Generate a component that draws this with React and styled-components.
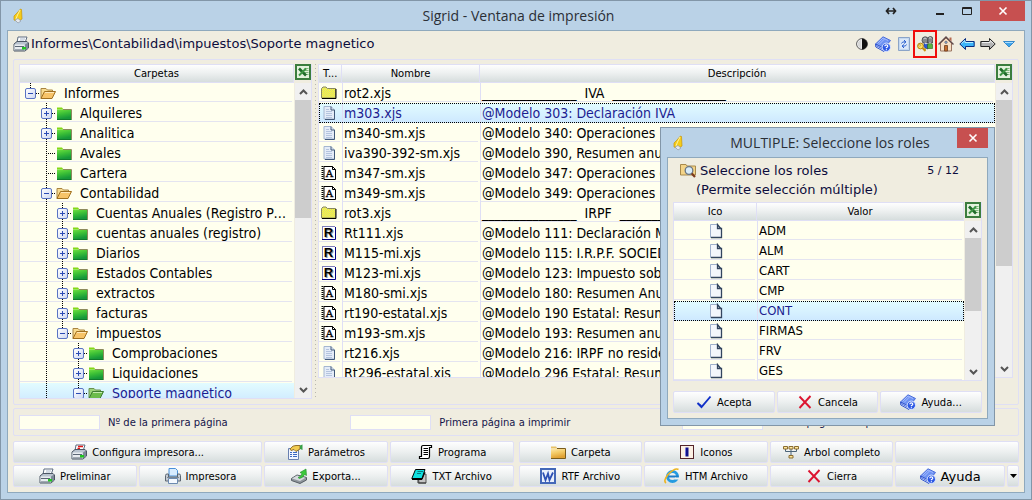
import React from "react";
import styled, { createGlobalStyle, css } from "styled-components";

const Global = createGlobalStyle`
  *, *::before, *::after { box-sizing: border-box; }
  html, body { margin: 0; padding: 0; }
  body { font-family: "DejaVu Sans", Verdana, sans-serif; font-size: 13px; color: #000; }
  button, input { font: inherit; color: inherit; }
`;

const LINE = "#dfdff5";
const FACE = "#f0ede0";
const PAPER = "#ffffee";
const LIST_FONT = '14px "DejaVu Sans Condensed", Tahoma, sans-serif';
const dotsDown = "repeating-linear-gradient(to bottom, #000 0 1px, transparent 1px 2px)";
const dotsRight = "repeating-linear-gradient(to right, #000 0 1px, transparent 1px 2px)";
const metal = "linear-gradient(#fefefe, #eef1f1 45%, #d6dddd)";
const glow = "linear-gradient(#e2fcff, #cde8ff)";

const frame = css`
  display: flex;
  flex-direction: column;
  background: #bad2e7;
  border: 1px solid #8296a8;
`;

const Window = styled.main`
  ${frame}
  position: relative;
  height: 100vh;
  min-height: 420px;
  overflow: hidden;
`;

const TitleBar = styled.header`
  display: grid;
  grid-template-columns: 1fr auto 1fr;
  align-items: center;
  height: 29px;
  flex: none;
  padding: 0 6px 0 11px;
`;

const Title = styled.h1`
  margin: 0;
  font: 400 14px "Open Sans", "Segoe UI", sans-serif;
  color: #2b2f36;
  white-space: nowrap;
`;

const WindowButtons = styled.div`
  display: flex;
  align-self: start;
  justify-self: end;
`;

const WindowButton = styled.button`
  width: ${(p) => p.$w || 27}px;
  height: 20px;
  padding: 0;
  border: 0;
  display: grid;
  place-items: center;
  background: ${(p) => (p.$close ? "#c75050" : "transparent")};
  margin-right: ${(p) => p.$after || 0}px;
`;

const Client = styled.div`
  flex: 1;
  min-height: 0;
  display: flex;
  flex-direction: column;
  margin: 0 6px 6px;
  border: 1px solid #8fa9bd;
  background: ${FACE};
  padding: 0 5px 5px;
`;

const PathBar = styled.div`
  display: flex;
  align-items: center;
  height: 28px;
  padding-bottom: 3px;
  flex: none;
`;

const PathText = styled.span`
  flex: 1;
  margin-left: 2px;
  color: #0c0c3c;
  white-space: nowrap;
`;

const Tools = styled.div`
  display: flex;
  align-items: center;
  gap: 5px;
  padding-right: 2px;
`;

const ToolButton = styled.button`
  position: relative;
  width: 16px;
  height: 16px;
  padding: 0;
  border: 0;
  background: none;
  display: grid;
  place-items: center;
  &::after {
    content: "";
    display: ${(p) => (p.$marked ? "block" : "none")};
    position: absolute;
    inset: -6px -4px;
    border: 2px solid #f00c0c;
  }
`;

const Group = styled.section`
  border: 1px solid ${LINE};
  border-radius: 2px;
`;

const Browser = styled(Group)`
  flex: 1;
  min-height: 0;
  display: flex;
  padding: 4px 5px 5px;
  margin-bottom: 3px;
`;

const Pane = styled.div`
  display: flex;
  min-width: 0;
  overflow: hidden;
  border: solid ${LINE};
  border-width: 0 1px 1px;
  background: ${PAPER};
  ${(p) => (p.$w ? `width: ${p.$w}px; flex: none;` : "flex: 1;")}
  margin-bottom: ${(p) => p.$lift || 0}px;
`;

const PaneBody = styled.div`
  flex: 1;
  min-width: 0;
  overflow: hidden;
`;

const Splitter = styled.div`
  width: 6px;
  flex: none;
  background: repeating-linear-gradient(to bottom, #b9b7ae 0 1px, transparent 1px 4px) 3px 0 / 1px 100% no-repeat;
`;

const Side = styled.div`
  width: 17px;
  flex: none;
  display: flex;
  flex-direction: column;
  background: ${FACE};
`;

const ExportButton = styled.button`
  height: 19px;
  padding: 0 0 0 1px;
  border: 0;
  background: none;
  display: flex;
`;

const Scroll = styled.div`
  flex: 1;
  display: flex;
  flex-direction: column;
  align-items: center;
  width: 16px;
  margin-left: 1px;
  background: #f0f0f0;
`;

const Thumb = styled.div`
  width: 100%;
  height: ${(p) => p.$h};
  background: #cdcdcd;
`;

const ScrollEnd = styled.div`
  height: 17px;
  flex: none;
  display: grid;
  place-items: center;
  ${(p) => p.$down && "margin-top: auto;"}
`;

const heading = css`
  height: 19px;
  padding: 0 4px;
  border: 1px solid ${LINE};
  border-left-width: 0;
  background: ${metal};
  font-size: 10px;
  font-weight: 400;
  line-height: 17px;
  text-align: center;
  white-space: nowrap;
`;

const TreeHeading = styled.div`
  ${heading}
`;

const TreeList = styled.ul`
  list-style: none;
  margin: 0;
  padding: 0;
  font: ${LIST_FONT};
`;

const TreeRow = styled.li`
  display: flex;
  align-items: center;
  height: 20px;
  padding-left: 2px;
  background: ${(p) =>
    p.$selected ? glow : "linear-gradient(#e4e4f0, #e4e4f0) 0 18px / calc(100% - 2px) 1px no-repeat"};
  color: ${(p) => (p.$selected ? "#1c1c90" : "#000")};
`;

const Guide = styled.span`
  width: 16px;
  height: 20px;
  flex: none;
  display: grid;
  place-items: center;
  background: ${(p) => (p.$line ? `${dotsDown} 8px 0 / 1px ${p.$half ? "10px" : "100%"} no-repeat` : "none")};
`;

const Expander = styled.button`
  width: 11px;
  height: 11px;
  padding: 0;
  border: 1px solid #5a74c4;
  border-radius: 2px;
  background: linear-gradient(135deg, #fff, #cfd9f2);
  display: grid;
  place-items: center;
`;

const Twig = styled.span`
  width: ${(p) => (p.$long ? 10 : 4)}px;
  margin-left: ${(p) => (p.$long ? -8 : -2)}px;
  height: 1px;
  flex: none;
  background: ${dotsRight};
`;

const TreeLabel = styled.span`
  margin-left: 8px;
  margin-right: 4px;
  flex: 1;
  overflow: hidden;
  text-overflow: ellipsis;
  white-space: nowrap;
`;

const Table = styled.table`
  width: 100%;
  table-layout: fixed;
  border-collapse: separate;
  border-spacing: 0;
`;

const HeadCell = styled.th`
  ${heading}
  overflow: hidden;
`;

const Cell = styled.td`
  height: 20px;
  padding: ${(p) => (p.$center ? "0" : "0 0 0 1px")};
  font: ${LIST_FONT};
  font-size: ${(p) => (p.$small ? 13 : 14)}px;
  line-height: 20px;
  overflow: hidden;
  white-space: pre;
  border-left: ${(p) => (p.$first ? 0 : 1)}px solid ${LINE};
  background: linear-gradient(#e4e4f0, #e4e4f0) 0 18px / calc(100% - 2px) 1px no-repeat;
  svg { display: block; margin: ${(p) => (p.$center ? "0 auto" : "0 1px")}; }
`;

const Row = styled.tr`
  ${(p) =>
    p.$selected &&
    css`
      background: ${glow};
      color: #1c1c90;
      outline: 1px dotted #000;
      outline-offset: -1px;
      ${Cell} { background: none; }
    `}
`;

const Options = styled(Group)`
  display: grid;
  grid-template-columns: repeat(3, 1fr);
  align-items: center;
  height: 28px;
  flex: none;
  padding: 0 5px;
  margin-bottom: 5px;
`;

const Option = styled.label`
  display: flex;
  align-items: center;
  gap: 8px;
  font-size: 10px;
  color: #14144a;
`;

const PageInput = styled.input`
  width: 81px;
  height: 15px;
  padding: 0 2px;
  border: 1px solid ${LINE};
  background: ${PAPER};
`;

const Actions = styled.div`
  display: flex;
  gap: 5px;
  flex: none;
`;

const ActionGrid = styled.div`
  flex: 1;
  display: grid;
  grid-template-columns: repeat(4, 1fr);
  grid-auto-rows: 22px;
  gap: 2px 2px;
`;

const ActionButton = styled.button`
  display: flex;
  align-items: center;
  justify-content: center;
  gap: 5px;
  min-width: 0;
  height: 22px;
  padding: 0;
  border: 1px solid ${LINE};
  border-radius: 2px;
  background: ${metal};
  font-size: ${(p) => (p.$large ? 13 : 10)}px;
  white-space: nowrap;
  ${(p) => p.$span && `grid-column: span ${p.$span};`}
`;

const SplitButton = styled.div`
  display: grid;
  grid-template-columns: 1fr 12px;
  gap: 2px;
`;

const Dialog = styled.section`
  ${frame}
  position: absolute;
  top: 126px;
  right: 36px;
  width: 335px;
`;

const DialogBody = styled(Client)`
  padding: 2px 5px 5px;
`;

const DialogLead = styled.div`
  display: flex;
  align-items: center;
  height: 20px;
  padding-left: 7px;
  gap: 4px;
  color: #0c0c3c;
`;

const DialogHint = styled.p`
  margin: 0;
  padding-left: 23px;
  line-height: 20px;
  height: 22px;
  color: #0c0c3c;
`;

const Counter = styled.span`
  margin-left: auto;
  padding-right: 23px;
  font-size: 11px;
`;

const DialogPane = styled(Pane)`
  height: 179px;
  flex: none;
`;

const DialogButtons = styled.div`
  display: grid;
  grid-template-columns: repeat(3, 1fr);
  gap: 2px;
  margin-top: 10px;
`;

const Svg = ({ w = 16, h = 16, children }) => (
  <svg width={w} height={h} viewBox={`0 0 ${w} ${h}`} aria-hidden="true">
    {children}
  </svg>
);

const Bell = () => (
  <Svg w={12} h={16}>
    <path d="M8.500 1L9.500 1.500L10 11L6 13.500L2 12V8L5 5Z" fill="#f5cc18" stroke="#c99406" strokeWidth=".7" />
    <path d="M8 2L5.500 7L4 11" stroke="#fff3a0" fill="none" />
    <path d="M3 12L6 10.500L9 13L6 15Z" fill="#e5e9ee" stroke="#8f9aa8" strokeWidth=".7" />
  </Svg>
);

const Printer = ({ red }) => (
  <Svg>
    <path d="M5 1H14L12 7H4Z" fill="#fff" stroke="#5c6b80" />
    {red ? (
      <path d="M7 2.500H12M6.500 4.500H9" stroke="#e01818" strokeWidth="1.500" />
    ) : (
      <path d="M7 3H12M6.500 5H11" stroke="#a9b8cc" />
    )}
    <path d="M1 8L4 5.500H14L15.500 7V12L12 15H1Z" fill="#b9c3cf" stroke="#4c5664" />
    <path d="M1.500 8.500H11.500V14.500H1.500Z" fill="#e8ecf0" />
    <path d="M2 10.500H11M2 14H11" stroke="#5b6675" />
    <path d="M12 8.500L15 6.500V12L12 14.500Z" fill="#7e8998" />
    <rect x="9" y="11" width="4" height="2.500" fill="#21c421" />
  </Svg>
);

const BluePrinter = () => (
  <Svg>
    <path d="M4 .5H10.500L12.500 2.500V8H4Z" fill="#d8ecff" stroke="#4a90d8" />
    <path d="M.5 7.500Q.5 6 2 6H3.500V9H12.500V6H14Q15.500 6 15.500 7.500V13H.5Z" fill="#c5ccd4" stroke="#5b6672" />
    <path d="M3.500 10.500H12.500V15.500H3.500Z" fill="#f4f9ff" stroke="#6c8ab0" />
    <path d="M2 9.500H14" stroke="#7b8692" />
  </Svg>
);

const BookHelp = () => (
  <Svg>
    <path d="M.5 8L8 .8L15.500 4.500L9 12.500Z" fill="#6e92f2" stroke="#4a6cd8" />
    <path d="M2.500 7.500L8 2L13 4.500M4 8.500L9.500 3" stroke="#a4bcff" fill="none" />
    <path d="M.5 8L9 12.500V15.500L.8 11Z" fill="#e0e9ff" stroke="#3457cc" />
    <path d="M1 9.500L9 14" stroke="#4c6ee0" />
    <circle cx="11.300" cy="11.300" r="4.200" fill="#2c58e4" stroke="#dfe9ff" />
    <path d="M9.800 10.200Q9.800 8.800 11.300 8.800T12.800 10.200Q12.800 11 11.400 11.600V12.300M11.400 13.200V14.200" stroke="#fff" strokeWidth="1.200" fill="none" />
  </Svg>
);

const Contrast = () => (
  <Svg>
    <circle cx="8" cy="8" r="5.400" fill="#fff" stroke="#555" />
    <path d="M8 2.600A5.400 5.400 0 0 1 8 13.400Z" fill="#111" />
    <path d="M4 6Q5 4 7.500 3.500V12.500Q5 12 4 10Z" fill="#d8d8d8" />
  </Svg>
);

const RefreshDoc = () => (
  <Svg>
    <path d="M2.500 1.500H13.500V14.500H2.500Z" fill="#c4d8f0" stroke="#8ba4c8" />
    <path d="M4 3H12V13H4Z" fill="#dbe8f8" />
    <path d="M5.500 7.500Q6 5.500 9 5.800M8 4L10 6L8 7.500M10.500 8.500Q10 10.500 7 10.200M8 12L6 10L8 8.500" stroke="#2d62d0" fill="none" />
  </Svg>
);

const UsersKey = () => (
  <Svg>
    <path d="M5 4.500Q5 .8 8 .8T11 3Q11 .5 13.500 .5T15.800 3.500L15.500 7H6Z" fill="#85898c" stroke="#3c4044" strokeWidth=".8" />
    <path d="M6.500 2.800Q8 1.200 9.500 2.800M11.800 2.300Q13 1 14.500 2.300" stroke="#d4d6d8" fill="none" />
    <path d="M10.800 3V7" stroke="#3c4044" />
    <path d="M6.500 9Q8 6 11 8.500V13L8 12Z" fill="#2a58d8" stroke="#1a357c" strokeWidth=".6" />
    <path d="M10.500 8.500Q13 6 15.500 8.500V12.500H10.500Z" fill="#58b040" stroke="#2a6018" strokeWidth=".6" />
    <path d="M7.500 6.500L9 8.500L10 7M12 6.500L13 8L14 6.500" fill="#fff" />
    <path d="M4.500 11L8.500 15M7 14.200L8.500 12.500" stroke="#c89010" strokeWidth="1.800" />
    <circle cx="3.500" cy="10" r="2.900" fill="#ffe060" stroke="#a87808" strokeWidth=".9" />
    <circle cx="2.800" cy="9.300" r=".9" fill="#fff" stroke="#8a6000" strokeWidth=".5" />
  </Svg>
);

const House = () => (
  <Svg>
    <path d="M2.500 7L8 2L13.500 7V15H2.500Z" fill="#f6dfc4" stroke="#9a7460" />
    <path d="M.5 8.500L8 1L15.500 8.500" stroke="#5f4a4a" strokeWidth="1.400" fill="none" />
    <path d="M11.500 1.500H13.500V5.500L11.500 3.500Z" fill="#b56a50" />
    <path d="M6.500 9.500H9.500V15H6.500Z" fill="#c46a2a" stroke="#6c3c20" strokeWidth=".8" />
    <circle cx="8" cy="6.300" r="1.200" fill="#7db4e8" stroke="#6c4c40" strokeWidth=".6" />
  </Svg>
);

const Arrow = ({ right }) => (
  <Svg>
    <g transform={right ? "matrix(-1 0 0 1 16 0)" : undefined}>
      <path d="M.8 8L6.500 2.500V5.500H15.200V10.500H6.500V13.500Z" fill={right ? "#b4b4b4" : "#3cb4f8"} stroke={right ? "#222" : "#0a2c80"} />
      <path d="M2.500 7.500L6 4.500V6.500H14" stroke={right ? "#f0f0f0" : "#b8ecff"} fill="none" />
    </g>
  </Svg>
);

const BlueTriangle = () => (
  <Svg>
    <path d="M2.500 5.500H13.500L8 11Z" fill="#3fa4ea" stroke="#1c78c4" strokeWidth=".8" />
    <path d="M4 6.500H12" stroke="#a8dcff" />
  </Svg>
);

const Excel = () => (
  <Svg>
    <rect x="1" y="1" width="14" height="14" fill="#e4f2de" stroke="#3b7d3f" strokeWidth="2" />
    <path d="M9.500 4.500H13.500M10 6.500H13.500M10 8.500H13.500M9.500 10.500H13.500" stroke="#7fb87c" />
    <path d="M4 4.500L11 11.500" stroke="#1f6b2a" strokeWidth="2.600" />
    <path d="M11 4.500L4 11.500" stroke="#3d9444" strokeWidth="2" />
  </Svg>
);

const Folder = ({ tone = "green" }) => {
  const green = tone === "green";
  return (
    <Svg>
      <defs>
        <linearGradient id={`folder-${tone}`} x1="0" y1="0" x2=".3" y2="1">
          <stop offset="0" stopColor={green ? "#72e040" : "#fdeab0"} />
          <stop offset=".5" stopColor={green ? "#3cc036" : "#f4cc68"} />
          <stop offset="1" stopColor={green ? "#16983a" : "#e0a234"} />
        </linearGradient>
      </defs>
      <path d="M1 4.500V2.500H6L7.500 4.500Z" fill={green ? "#86d816" : "#e8c268"} />
      <path d="M1 4.500H15V14H1Z" fill={`url(#folder-${tone})`} />
      <path d="M7 4.500H15.500V14.500" stroke={green ? "#8d8a5c" : "#7a5c1c"} fill="none" />
      <path d="M1 14.500H15.500" stroke={green ? "#0f7a2a" : "#7a5c1c"} />
    </Svg>
  );
};

const OpenFolder = ({ green }) => (
  <Svg>
    <path d="M1 13.500V3.500H6L7.500 5H12.500V7" fill={green ? "#9cd47a" : "#f8dc90"} stroke={green ? "#6a9050" : "#a88440"} />
    <path d="M1 13.500L4.500 6.500H15.500L12 13.500Z" fill={green ? "#6cbc4c" : "#f7c468"} stroke={green ? "#3f7d34" : "#a07020"} />
    <path d="M5 7.500H14" stroke={green ? "#c4ecae" : "#ffe9b8"} />
  </Svg>
);

const HatchFolder = () => (
  <Svg>
    <defs>
      <pattern id="hatch" width="2" height="2" patternUnits="userSpaceOnUse">
        <rect width="2" height="2" fill="#ffff30" />
        <rect width="1" height="1" fill="#d4d480" />
        <rect x="1" y="1" width="1" height="1" fill="#d4d480" />
      </pattern>
    </defs>
    <path d="M.5 13V3.500L2 2H5L6.500 3.500H14.500V13Z" fill="url(#hatch)" stroke="#8a8a60" />
    <path d="M1 13.500H15V4" fill="none" stroke="#000" />
  </Svg>
);

const LinedPage = () => (
  <Svg>
    <path d="M3 1.500H10L13.500 5V14H3Z" fill="#e4ecf8" stroke="#a4b6d0" />
    <path d="M10 1.500V5H13.500V14.500H4" fill="none" stroke="#405878" />
    <path d="M5 4.500H8M5 6.500H11M5 8.500H11M5 10.500H11M5 12.500H11" stroke="#b4c4de" />
  </Svg>
);

const BlankPage = () => (
  <Svg>
    <path d="M2.500 1.500H9.500L13.500 5.500V14.500H2.500Z" fill="#f4f7fc" stroke="#9fb0cc" />
    <path d="M13 6L9.500 1.500V5.500H13.500V14.500H3" fill="none" stroke="#33455f" strokeWidth="1.300" />
  </Svg>
);

const LetterA = () => (
  <Svg>
    <path d="M3 1.500H11.500L14.500 4.500V14.500H3Z" fill="#fff" stroke="#000" />
    <path d="M11.500 1.500V4.500H14.500" fill="none" stroke="#000" />
    <path d="M1.500 1V15" stroke="#000" strokeWidth="2" strokeDasharray="1 1" />
    <text x="8.500" y="12" fontSize="11" textAnchor="middle" fontFamily="Liberation Serif, serif" stroke="#000" strokeWidth=".3">A</text>
  </Svg>
);

const LetterR = () => (
  <Svg>
    <path d="M1.500 14.500V1.500H14.500" fill="#fff" stroke="#000080" strokeDasharray="1 1" />
    <rect x="2" y="2" width="12" height="12" fill="#fff" />
    <path d="M1 14.500H14.500V2" fill="none" stroke="#000080" />
    <text x="8.500" y="13" fontSize="13" textAnchor="middle" fontFamily="Liberation Sans, sans-serif" fontWeight="700" fill="#999">R</text>
    <text x="7.500" y="12" fontSize="13" textAnchor="middle" fontFamily="Liberation Sans, sans-serif" fontWeight="700">R</text>
  </Svg>
);

const SearchFolder = () => (
  <Svg>
    <path d="M.5 13V2.500H6L7 4H15.500V13Z" fill="#f4d488" stroke="#a88a4c" />
    <circle cx="9" cy="8.500" r="3.800" fill="#d8ecfa" stroke="#6a7684" strokeWidth="1.300" />
    <path d="M11.800 11.500L15 15" stroke="#7c3a1c" strokeWidth="2.200" />
  </Svg>
);

const HandList = () => (
  <Svg>
    <path d="M1.500 4.500H11.500V15.500H1.500Z" fill="#f2f6ff" stroke="#6880b0" />
    <path d="M3 8.500H5M6 8.500H10M3 10.500H5M6 10.500H10M3 12.500H5M6 12.500H10" stroke="#3c68c0" />
    <path d="M3 5Q6 1 9 1.500L13 1.500V5L9 7.500L7 5.500L4 6.500Z" fill="#f2cc50" stroke="#94702c" />
    <path d="M13 1.500L15.500 .5V6L13 5Z" fill="#38a048" />
  </Svg>
);

const ExportIcon = () => (
  <Svg>
    <path d="M.5 10.500L6 7L15.500 9.500V12L9 15.500L.5 12.500Z" fill="#8f969c" stroke="#555c64" />
    <path d="M1 10.500L6 7.500L14.500 9.800L9 13Z" fill="#d5dade" />
    <path d="M7 9.500Q10 9 11 5.500L9 4.500L15 1L15.500 7.500L13.500 6.500Q12 10 8.500 10.500Z" fill="#3cc83c" stroke="#1f8c28" strokeWidth=".6" />
  </Svg>
);

const Scroller = () => (
  <Svg>
    <path d="M4.500 13V3.500Q4.500 1.500 6 1.500H14.500V3.500H12.500V12.500Q12.500 14.500 11 14.500H2.500V12.500H4.500" fill="#fff" stroke="#000" strokeWidth="1.200" />
    <path d="M6.500 4.500H11M6.500 6.500H11M6.500 8.500H11M6.500 10.500H11" stroke="#000" />
  </Svg>
);

const TxtPad = () => (
  <Svg>
    <path d="M7 6H15V15H8Z" fill="#c4c4c4" stroke="#555" />
    <path d="M4.500 1.500H14L11 10.500H.8Z" fill="#10e0e0" stroke="#000" />
    <path d="M6.500 3.500H12M6 5.500H10" stroke="#067a80" />
    <path d="M1 11.500H11L14 4" fill="none" stroke="#000" />
    <path d="M7 12V15H15" fill="none" stroke="#333" />
  </Svg>
);

const WordIcon = () => (
  <Svg>
    <rect x="1" y="1" width="14" height="14" fill="#eaf0fc" stroke="#4468b8" strokeWidth="2" />
    <path d="M3 4.500L5.500 12L8 5.500L9.500 12L13 4.500" fill="none" stroke="#2c50b4" strokeWidth="1.800" />
  </Svg>
);

const BarIcon = () => (
  <Svg>
    <rect x="1.500" y="1.500" width="13" height="13" fill="#fbf0e4" stroke="#54242a" />
    <path d="M8 3.500V12.500" stroke="#101088" strokeWidth="3" />
    <path d="M6.500 4V12" stroke="#7878d8" />
  </Svg>
);

const IeIcon = () => (
  <Svg>
    <circle cx="8.500" cy="8.500" r="5" fill="none" stroke="#259be0" strokeWidth="3" />
    <path d="M4.500 8.500H14.500" stroke="#1d7cc8" strokeWidth="2" />
    <path d="M11 9.500H16V11.500H11Z" fill="#eef0ef" />
    <path d="M2 15Q-1 13 4 6.500Q11 -.5 14.500 1.500" fill="none" stroke="#eeb420" strokeWidth="1.600" />
  </Svg>
);

const TreeIcon = () => (
  <Svg>
    <path d="M2.500 5V7.500H13.500V5M8 5V12" fill="none" stroke="#4c6478" />
    <path d="M.5 2.500H4.500V5H.5ZM6 2.500H10V5H6ZM11.500 2.500H15.500V5H11.500ZM6 11.500H10V14H6Z" fill="#ffe89c" stroke="#8a6c30" />
  </Svg>
);

const RedCross = () => (
  <Svg>
    <path d="M2.500 2.500L13.500 14M13.500 2L2.500 14" stroke="#dc1430" strokeWidth="1.900" fill="none" />
  </Svg>
);

const Check = () => (
  <Svg>
    <path d="M1.500 9L5.500 13L14.500 2.500" stroke="#1030c8" strokeWidth="1.900" fill="none" />
    <path d="M1.500 8.500L5.500 11L5.500 14Z" fill="#1030c8" />
  </Svg>
);

const WinGlyph = ({ kind }) => (
  <Svg w={12} h={12}>
    {kind === "close" && <path d="M2.500 2.500L9.500 9.500M9.500 2.500L2.500 9.500" stroke="#fff" strokeWidth="1.600" />}
    {kind === "max" && <path d="M1.500 2.500H10.500V9.500H1.500ZM1.500 3.500H10.500" fill="none" stroke="#222" />}
    {kind === "min" && <path d="M2 9H10" stroke="#222" strokeWidth="2" />}
    {kind === "wide" && <path d="M1.500 6H10.500M4 3L1.500 6L4 9M8 3L10.500 6L8 9" fill="none" stroke="#222" strokeWidth="1.700" />}
  </Svg>
);

const Chevron = ({ down }) => (
  <Svg w={9} h={6}>
    <path d={down ? "M1 1L4.500 4.500L8 1" : "M1 5L4.500 1.500L8 5"} fill="none" stroke="#555" strokeWidth="2" />
  </Svg>
);

const ScrollBar = ({ thumb }) => (
  <Scroll>
    <ScrollEnd><Chevron /></ScrollEnd>
    <Thumb $h={thumb} />
    <ScrollEnd $down><Chevron down /></ScrollEnd>
  </Scroll>
);

const SideColumn = ({ thumb }) => (
  <Side>
    <ExportButton aria-label="Excel"><Excel /></ExportButton>
    <ScrollBar thumb={thumb} />
  </Side>
);

const tree = [
  { name: "Informes", level: 0, box: "-", open: true, last: true },
  { name: "Alquileres", level: 1, box: "+" },
  { name: "Analitica", level: 1, box: "+" },
  { name: "Avales", level: 1 },
  { name: "Cartera", level: 1 },
  { name: "Contabilidad", level: 1, box: "-", open: true },
  { name: "Cuentas Anuales (Registro Provincial)", level: 2, box: "+" },
  { name: "cuentas anuales (registro)", level: 2, box: "+" },
  { name: "Diarios", level: 2, box: "+" },
  { name: "Estados Contables", level: 2, box: "+" },
  { name: "extractos", level: 2, box: "+" },
  { name: "facturas", level: 2, box: "+" },
  { name: "impuestos", level: 2, box: "-", open: true, last: true },
  { name: "Comprobaciones", level: 3, box: "+" },
  { name: "Liquidaciones", level: 3, box: "+" },
  { name: "Soporte magnetico", level: 3, box: "-", open: true, selected: true },
];

const rule = (title) => `${"_".repeat(15)}  ${title}  ${"_".repeat(18)}`;

const files = [
  [HatchFolder, "rot2.xjs", rule("IVA")],
  [LinedPage, "m303.xjs", "@Modelo 303: Declaración IVA"],
  [LinedPage, "m340-sm.xjs", "@Modelo 340: Operaciones incluidas"],
  [LinedPage, "iva390-392-sm.xjs", "@Modelo 390, Resumen anual"],
  [LetterA, "m347-sm.xjs", "@Modelo 347: Operaciones con terceros"],
  [LetterA, "m349-sm.xjs", "@Modelo 349: Operaciones intracomunitarias"],
  [HatchFolder, "rot3.xjs", rule("IRPF")],
  [LetterR, "Rt111.xjs", "@Modelo 111: Declaración Mensual"],
  [LetterR, "M115-mi.xjs", "@Modelo 115: I.R.P.F. SOCIEDADES"],
  [LetterR, "M123-mi.xjs", "@Modelo 123: Impuesto sobre la renta"],
  [LetterA, "M180-smi.xjs", "@Modelo 180: Resumen Anual"],
  [LetterA, "rt190-estatal.xjs", "@Modelo 190 Estatal: Resumen anual"],
  [LetterA, "m193-sm.xjs", "@Modelo 193: Resumen anual"],
  [LinedPage, "rt216.xjs", "@Modelo 216: IRPF no residentes"],
  [LinedPage, "Rt296-estatal.xjs", "@Modelo 296 Estatal: Resumen anual"],
];

const roles = ["ADM", "ALM", "CART", "CMP", "CONT", "FIRMAS", "FRV", "GES"];

const TreeItem = ({ name, level, box, open, last, selected }) => (
  <TreeRow $selected={selected}>
    {Array.from({ length: level }, (_, i) => (
      <Guide key={i} $line={i === 1} />
    ))}
    <Guide $line $half={last}>
      {box && (
        <Expander aria-label={name}>
          <Svg w={7} h={7}>
            <path d={box === "+" ? "M1 3.500H6M3.500 1V6" : "M1 3.500H6"} stroke="#2c4cb4" />
          </Svg>
        </Expander>
      )}
    </Guide>
    <Twig $long={!box} />
    {open ? <OpenFolder green={selected} /> : <Folder />}
    <TreeLabel>{name}</TreeLabel>
  </TreeRow>
);

const Action = ({ icon: Icon, children, ...rest }) => (
  <ActionButton {...rest}>
    {Icon && <Icon />}
    {children}
  </ActionButton>
);

export default function App() {
  return (
    <>
      <Global />
      <Window>
        <TitleBar>
          <Bell />
          <Title>Sigrid - Ventana de impresión</Title>
          <WindowButtons>
            <WindowButton aria-label="Ancho" $after={22}><WinGlyph kind="wide" /></WindowButton>
            <WindowButton aria-label="Minimizar"><WinGlyph kind="min" /></WindowButton>
            <WindowButton aria-label="Maximizar"><WinGlyph kind="max" /></WindowButton>
            <WindowButton aria-label="Cerrar" $close $w={45}><WinGlyph kind="close" /></WindowButton>
          </WindowButtons>
        </TitleBar>

        <Client>
          <PathBar>
            <Printer />
            <PathText>Informes\Contabilidad\impuestos\Soporte magnetico</PathText>
            <Tools>
              <ToolButton aria-label="Contraste"><Contrast /></ToolButton>
              <ToolButton aria-label="Manual"><BookHelp /></ToolButton>
              <ToolButton aria-label="Actualizar"><RefreshDoc /></ToolButton>
              <ToolButton aria-label="Roles" $marked><UsersKey /></ToolButton>
              <ToolButton aria-label="Inicio"><House /></ToolButton>
              <ToolButton aria-label="Anterior"><Arrow /></ToolButton>
              <ToolButton aria-label="Siguiente"><Arrow right /></ToolButton>
              <ToolButton aria-label="Más"><BlueTriangle /></ToolButton>
            </Tools>
          </PathBar>

          <Browser>
            <Pane $w={293}>
              <PaneBody>
                <TreeHeading>Carpetas</TreeHeading>
                <TreeList>
                  {tree.map((item) => (
                    <TreeItem key={item.name} {...item} />
                  ))}
                </TreeList>
              </PaneBody>
              <SideColumn thumb="118px" />
            </Pane>
            <Splitter />
            <Pane $lift={21}>
              <PaneBody>
                <Table>
                  <colgroup>
                    <col width="23" />
                    <col width="138" />
                    <col />
                  </colgroup>
                  <thead>
                    <tr>
                      <HeadCell>T...</HeadCell>
                      <HeadCell>Nombre</HeadCell>
                      <HeadCell>Descripción</HeadCell>
                    </tr>
                  </thead>
                  <tbody>
                    {files.map(([Icon, name, text], i) => (
                      <Row key={name} $selected={i === 1}>
                        <Cell $first><Icon /></Cell>
                        <Cell>{name}</Cell>
                        <Cell>{text}</Cell>
                      </Row>
                    ))}
                  </tbody>
                </Table>
              </PaneBody>
              <SideColumn thumb="166px" />
            </Pane>
          </Browser>

          <Options>
            <Option><PageInput />Nº de la primera página</Option>
            <Option><PageInput />Primera página a imprimir</Option>
            <Option><PageInput />Última página a imprimir</Option>
          </Options>

          <Actions>
            <ActionGrid>
              <Action icon={() => <Printer red />} $span={2}>Configura impresora...</Action>
              <Action icon={HandList}>Parámetros</Action>
              <Action icon={Scroller}>Programa</Action>
              <Action icon={Printer}>Preliminar</Action>
              <Action icon={BluePrinter}>Impresora</Action>
              <Action icon={ExportIcon}>Exporta...</Action>
              <Action icon={TxtPad}>TXT Archivo</Action>
            </ActionGrid>
            <ActionGrid>
              <Action icon={() => <Folder tone="gold" />}>Carpeta</Action>
              <Action icon={BarIcon}>Iconos</Action>
              <Action icon={TreeIcon}>Arbol completo</Action>
              <Action aria-label="Vacío" />
              <Action icon={WordIcon}>RTF Archivo</Action>
              <Action icon={IeIcon}>HTM Archivo</Action>
              <Action icon={RedCross}>Cierra</Action>
              <SplitButton>
                <Action icon={BookHelp} $large>Ayuda</Action>
                <ActionButton aria-label="Más ayuda">
                  <Svg w={7} h={4}><path d="M0 0H7L3.500 4Z" /></Svg>
                </ActionButton>
              </SplitButton>
            </ActionGrid>
          </Actions>
        </Client>

        <Dialog role="dialog" aria-label="Seleccione los roles">
          <TitleBar>
            <Bell />
            <Title as="h2">MULTIPLE: Seleccione los roles</Title>
            <WindowButtons>
              <WindowButton aria-label="Cerrar" $close $w={31}><WinGlyph kind="close" /></WindowButton>
            </WindowButtons>
          </TitleBar>
          <DialogBody>
            <DialogLead>
              <SearchFolder />
              <span>Seleccione los roles</span>
              <Counter>5 / 12</Counter>
            </DialogLead>
            <DialogHint>(Permite selección múltiple)</DialogHint>
            <DialogPane>
              <PaneBody>
                <Table>
                  <colgroup>
                    <col width="83" />
                    <col />
                  </colgroup>
                  <thead>
                    <tr>
                      <HeadCell>Ico</HeadCell>
                      <HeadCell>Valor</HeadCell>
                    </tr>
                  </thead>
                  <tbody>
                    {roles.map((role) => (
                      <Row key={role} $selected={role === "CONT"}>
                        <Cell $first $center><BlankPage /></Cell>
                        <Cell $small>{role}</Cell>
                      </Row>
                    ))}
                  </tbody>
                </Table>
              </PaneBody>
              <SideColumn thumb="73px" />
            </DialogPane>
            <DialogButtons>
              <Action icon={Check}>Acepta</Action>
              <Action icon={RedCross}>Cancela</Action>
              <Action icon={BookHelp}>Ayuda...</Action>
            </DialogButtons>
          </DialogBody>
        </Dialog>
      </Window>
    </>
  );
}
